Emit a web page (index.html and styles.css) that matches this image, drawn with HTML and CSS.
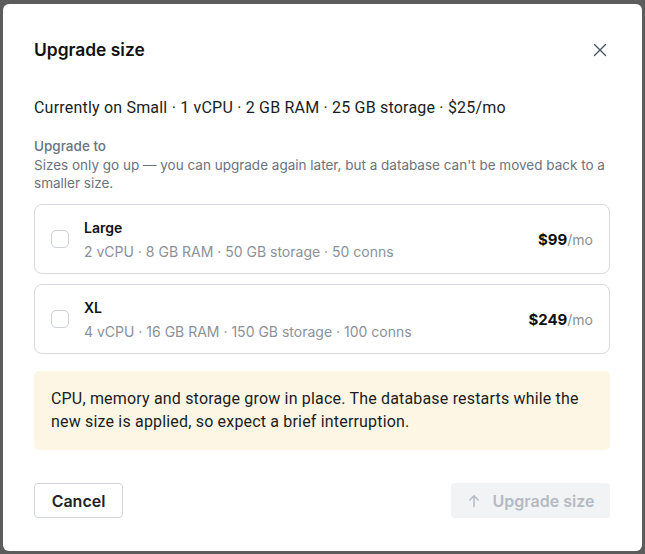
FILE: index.html
```html
<!DOCTYPE html>
<html lang="en">
<head>
  <meta charset="UTF-8">
  <title>Upgrade size</title>
  <link rel="stylesheet" href="styles.css">
</head>
<body>
  <div class="dialog">
    <div class="dialog-header">
      <h2>Upgrade size</h2>
      <button class="close-btn" aria-label="Close">
        <svg width="14" height="14" viewBox="0 0 14 14"><path d="M1.5 1.5l11 11M12.5 1.5l-11 11" stroke="#4b5563" stroke-width="1.4" stroke-linecap="round"/></svg>
      </button>
    </div>

    <p class="current">Currently on Small · 1 vCPU · 2 GB RAM · 25 GB storage · $25/mo</p>

    <div class="field-label">Upgrade to</div>
    <p class="field-help">Sizes only go up — you can upgrade again later, but a database can't be moved back to a smaller size.</p>

    <div class="options">
      <label class="option">
        <span class="checkbox"></span>
        <span class="option-info">
          <span class="option-name">Large</span>
          <span class="option-specs">2 vCPU · 8 GB RAM · 50 GB storage · 50 conns</span>
        </span>
        <span class="option-price"><strong>$99</strong>/mo</span>
      </label>
      <label class="option">
        <span class="checkbox"></span>
        <span class="option-info">
          <span class="option-name">XL</span>
          <span class="option-specs">4 vCPU · 16 GB RAM · 150 GB storage · 100 conns</span>
        </span>
        <span class="option-price"><strong>$249</strong>/mo</span>
      </label>
    </div>

    <div class="notice">
      CPU, memory and storage grow in place. The database restarts while the new size is applied, so expect a brief interruption.
    </div>

    <div class="dialog-footer">
      <button class="btn btn-cancel">Cancel</button>
      <button class="btn btn-primary" disabled>
        <svg width="14" height="14" viewBox="0 0 14 14"><path d="M7 12.5V1.8M2.8 6L7 1.8 11.2 6" fill="none" stroke="#b4bac4" stroke-width="1.5" stroke-linecap="round" stroke-linejoin="round"/></svg>
        Upgrade size
      </button>
    </div>
  </div>
</body>
</html>
```

FILE: styles.css
```css
body {
  margin: 0;
  font-family: Roboto, 'Noto Sans', sans-serif;
  background: #5c5c5c;
  height: 554px;
  display: flex;
  align-items: flex-start;
  justify-content: center;
  color: #1a1d23;
}

.dialog {
  width: 639px;
  height: 547px;
  box-sizing: border-box;
  margin-top: 4px;
  background: #fff;
  border-radius: 6px;
  padding: 34px 32px 0 31px;
}

.dialog-header {
  display: flex;
  justify-content: space-between;
  align-items: center;
}

.dialog-header h2 {
  margin: 0;
  font-family: Inter, sans-serif;
  font-size: 17.4px;
  line-height: 24px;
  font-weight: 600;
  color: #111;
}

.close-btn {
  background: none;
  border: none;
  padding: 0;
  margin-right: 3px;
  width: 14px;
  height: 14px;
  cursor: pointer;
}

.current {
  margin: 34px 0 0;
  font-size: 16px;
  line-height: 24px;
  letter-spacing: 0.2px;
  color: #1a1d23;
}

.field-label {
  margin-top: 16px;
  font-family: Inter, sans-serif;
  font-size: 13.5px;
  line-height: 20px;
  font-weight: 500;
  color: #6b7280;
}

.field-help {
  margin: 0;
  font-family: Inter, sans-serif;
  font-size: 13.5px;
  line-height: 18px;
  color: #6b7280;
}

.options {
  margin-top: 12px;
  display: flex;
  flex-direction: column;
  gap: 10px;
}

.option {
  display: flex;
  align-items: center;
  height: 70px;
  box-sizing: border-box;
  border: 1px solid #d6d9de;
  border-radius: 8px;
  padding: 0 16px;
  cursor: pointer;
}

.checkbox {
  width: 16px;
  height: 16px;
  border: 1px solid #cdd1d7;
  border-radius: 5px;
  margin-right: 15px;
  flex-shrink: 0;
}

.option-info {
  display: flex;
  flex-direction: column;
  flex: 1;
  gap: 5px;
  font-family: Inter, sans-serif;
}

.option-name {
  font-size: 14px;
  font-weight: 600;
  line-height: 19px;
  color: #111;
}

.option-specs {
  font-size: 14px;
  line-height: 19px;
  color: #8b919a;
}

.option-price {
  font-family: Inter, sans-serif;
  font-size: 14px;
  color: #8b919a;
}

.option-price strong {
  font-size: 15px;
  font-weight: 700;
  color: #111;
}

.notice {
  margin-top: 17px;
  background: #fdf6e4;
  border-radius: 5px;
  padding: 16px 17px 17px;
  font-size: 16px;
  line-height: 23px;
  letter-spacing: 0.18px;
  color: #1a1d23;
}

.dialog-footer {
  margin-top: 33px;
  display: flex;
  justify-content: space-between;
}

.btn {
  height: 35px;
  box-sizing: border-box;
  border-radius: 4px;
  font-family: Inter, sans-serif;
  font-size: 16px;
  font-weight: 600;
  display: inline-flex;
  align-items: center;
  gap: 12px;
}

.btn-cancel {
  width: 89px;
  justify-content: center;
  background: #fff;
  border: 1px solid #d1d5db;
  color: #1f2329;
  cursor: pointer;
}

.btn-primary {
  width: 159px;
  justify-content: center;
  background: #f2f3f5;
  border: none;
  color: #b4bac4;
}
```
